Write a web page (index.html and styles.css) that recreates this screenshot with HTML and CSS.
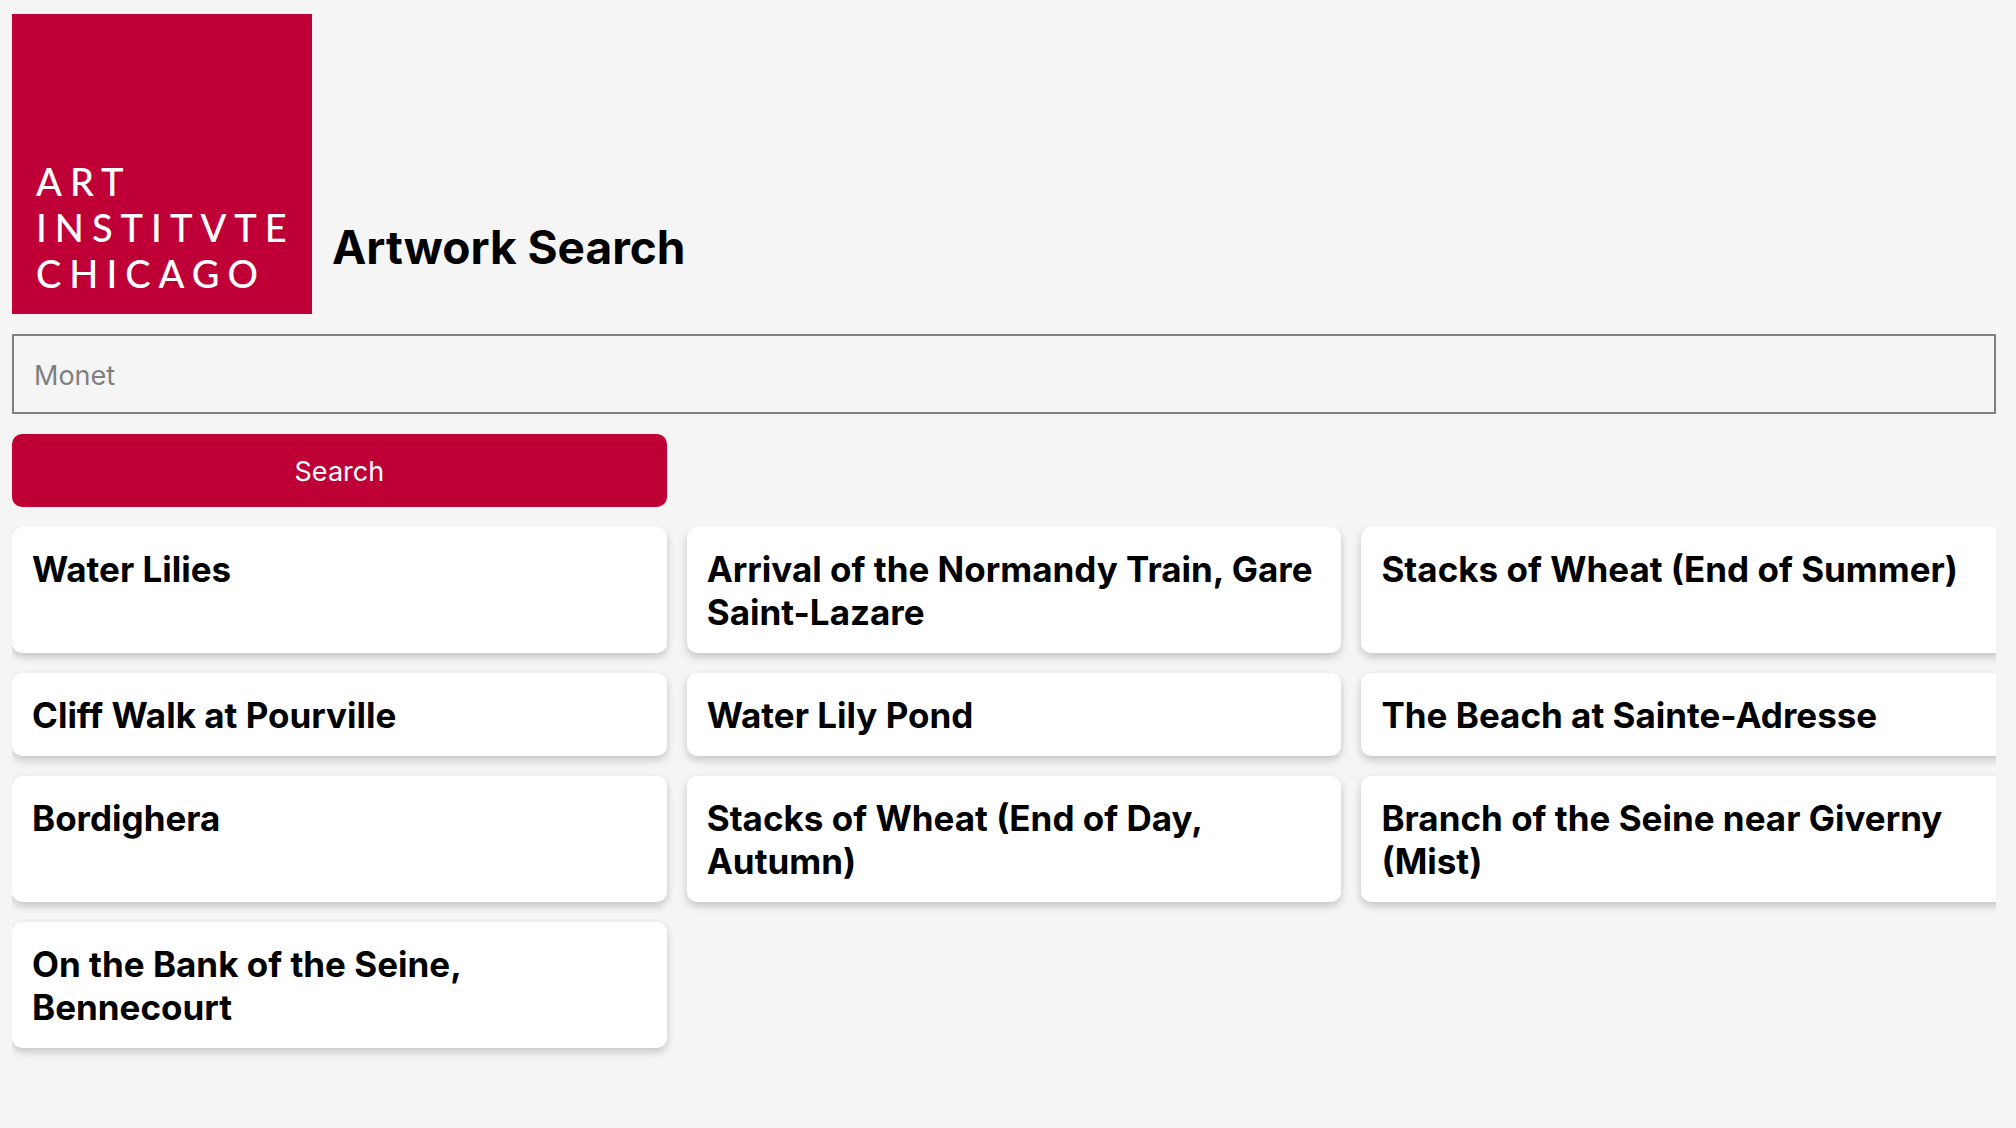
FILE: index.html
```html
<!DOCTYPE html>
<html lang="en">
<head>
  <meta charset="utf-8">
  <meta name="viewport" content="width=device-width, initial-scale=1">
  <title>Artwork Search</title>
  <link rel="stylesheet" href="styles.css">
</head>
<body>
  <header class="masthead">
    <div class="logo">
      <span>ART</span>
      <span>INSTITVTE</span>
      <span>CHICAGO</span>
    </div>
    <h1 class="title">Artwork Search</h1>
  </header>
  <main class="content">
    <form class="search">
      <input class="search-input" type="text" name="q" placeholder="Monet" aria-label="Search artworks">
      <button class="search-button" type="submit">Search</button>
    </form>
    <section class="results" aria-label="Results">
      <article class="card"><h2>Water Lilies</h2></article>
      <article class="card"><h2>Arrival of the Normandy Train, Gare Saint-Lazare</h2></article>
      <article class="card"><h2>Stacks of Wheat (End of Summer)</h2></article>
      <article class="card"><h2>Cliff Walk at Pourville</h2></article>
      <article class="card"><h2>Water Lily Pond</h2></article>
      <article class="card"><h2>The Beach at Sainte-Adresse</h2></article>
      <article class="card"><h2>Bordighera</h2></article>
      <article class="card"><h2>Stacks of Wheat (End of Day, Autumn)</h2></article>
      <article class="card"><h2>Branch of the Seine near Giverny (Mist)</h2></article>
      <article class="card"><h2>On the Bank of the Seine, Bennecourt</h2></article>
    </section>
  </main>
</body>
</html>
```
FILE: styles.css
```css
* {
  box-sizing: border-box;
}

body {
  margin: 0;
  padding: 14px 20px 20px 12px;
  background: #f5f5f5;
  color: #000;
  font-family: Inter, "Liberation Sans", sans-serif;
}

.masthead {
  display: flex;
  align-items: flex-end;
  gap: 20px;
  margin-bottom: 20px;
}

.logo {
  display: flex;
  flex-direction: column;
  justify-content: flex-end;
  width: 300px;
  height: 300px;
  padding: 0 0 18px 24px;
  background: #be0037;
  color: #fff;
  font-family: Lato, sans-serif;
  font-size: 38px;
  font-weight: 500;
  line-height: 46px;
  letter-spacing: 8px;
  white-space: nowrap;
}

.title {
  margin: 0 0 38px;
  font-size: 46px;
  line-height: 58px;
}

.search {
  display: grid;
  gap: 20px;
  margin-bottom: 20px;
}

.search-input {
  width: 100%;
  height: 80px;
  padding: 22px 20px 20px;
  border: 2px solid #808080;
  background: transparent;
  font: inherit;
  font-size: 27px;
}

.search-input::placeholder {
  color: #808080;
}

.search-button {
  width: 33%;
  padding: 21px 20px 19px;
  border: 0;
  border-radius: 10px;
  background: #be0037;
  color: #fff;
  font: inherit;
  font-size: 27px;
  line-height: 33px;
}

.results {
  display: grid;
  grid-template-columns: repeat(3, 33%);
  gap: 20px;
  padding-bottom: 20px;
  overflow: hidden;
}

.card {
  padding: 21px 20px 19px;
  border-radius: 10px;
  background: #fff;
  box-shadow: 0 4px 8px rgba(0, 0, 0, 0.2);
}

.card h2 {
  margin: 0;
  font-size: 35px;
  line-height: 43px;
}
```
